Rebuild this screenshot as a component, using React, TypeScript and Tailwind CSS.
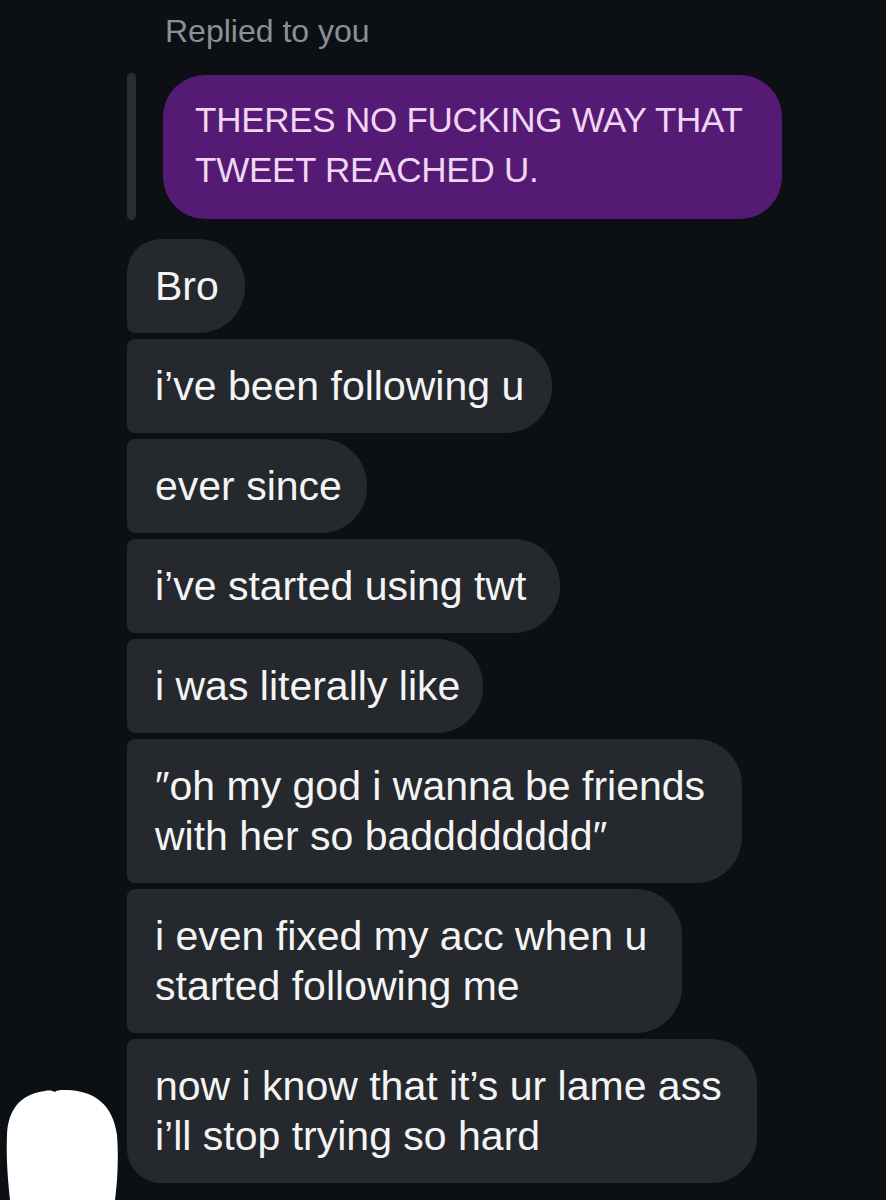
import React from "react";

type Msg = { lines: string[]; w: number };

const msgs: Msg[] = [
  { lines: ["Bro"], w: 118 },
  { lines: ["i\u2019ve been following u"], w: 425 },
  { lines: ["ever since"], w: 240 },
  { lines: ["i\u2019ve started using twt"], w: 433 },
  { lines: ["i was literally like"], w: 356 },
  { lines: ["\u2033oh my god i wanna be friends", "with her so badddddddd\u2033"], w: 615 },
  { lines: ["i even fixed my acc when u", "started following me"], w: 555 },
  { lines: ["now i know that it\u2019s ur lame ass", "i\u2019ll stop trying so hard"], w: 630 },
];

export default function App() {
  return (
    <div
      className="w-[886px] h-[1200px] overflow-hidden bg-[#0c0f13] flex"
      style={{ fontFamily: '"Liberation Sans", Arial, sans-serif' }}
    >
      <div className="w-[127px] shrink-0 flex flex-col justify-end pl-[5px]">
        <svg width="115" height="110" viewBox="0 0 115 110" className="block">
          <path
            d="M 5 110 C 3 90, 1 70, 2 45 C 3 20, 15 4, 40 1 C 45 0, 48 1, 50 2 C 52 0, 56 0, 62 0 C 90 1, 108 15, 112 45 C 114 70, 112 95, 110 110 Z"
            fill="#ffffff"
          />
        </svg>
      </div>
      <div className="flex flex-col">
        <div className="mt-[11px] pl-[38px] text-[32px] leading-[40px] text-[#8b9098]">
          Replied to you
        </div>
        <div className="mt-[22px] flex items-start gap-[27px]">
          <div className="w-[9px] h-[147px] rounded-full bg-[#2a2d31]" />
          <div className="mt-[2px] w-[619px] h-[144px] rounded-[42px] bg-[#551a74] pl-[32px] pt-[20px] text-[35px] leading-[50px] tracking-[-0.25px] text-[#efd6f3] whitespace-nowrap">
            THERES NO FUCKING WAY THAT
            <br />
            TWEET REACHED U.
          </div>
        </div>
        <div className="mt-[19px] flex flex-col gap-[6px]">
          {msgs.map((m, i) => {
            const first = i === 0;
            const last = i === msgs.length - 1;
            const corner = first
              ? "rounded-tl-[34px] rounded-bl-[8px]"
              : last
              ? "rounded-tl-[8px] rounded-bl-[34px]"
              : "rounded-tl-[8px] rounded-bl-[8px]";
            return (
              <div
                key={i}
                className={`bg-[#25282c] rounded-r-[46px] ${corner} pl-[28px] py-[22px] text-[41px] leading-[50px] text-[#f4f4f5] whitespace-nowrap`}
                style={{ width: m.w }}
              >
                {m.lines.map((l, j) => (
                  <div key={j}>{l}</div>
                ))}
              </div>
            );
          })}
        </div>
      </div>
    </div>
  );
}
